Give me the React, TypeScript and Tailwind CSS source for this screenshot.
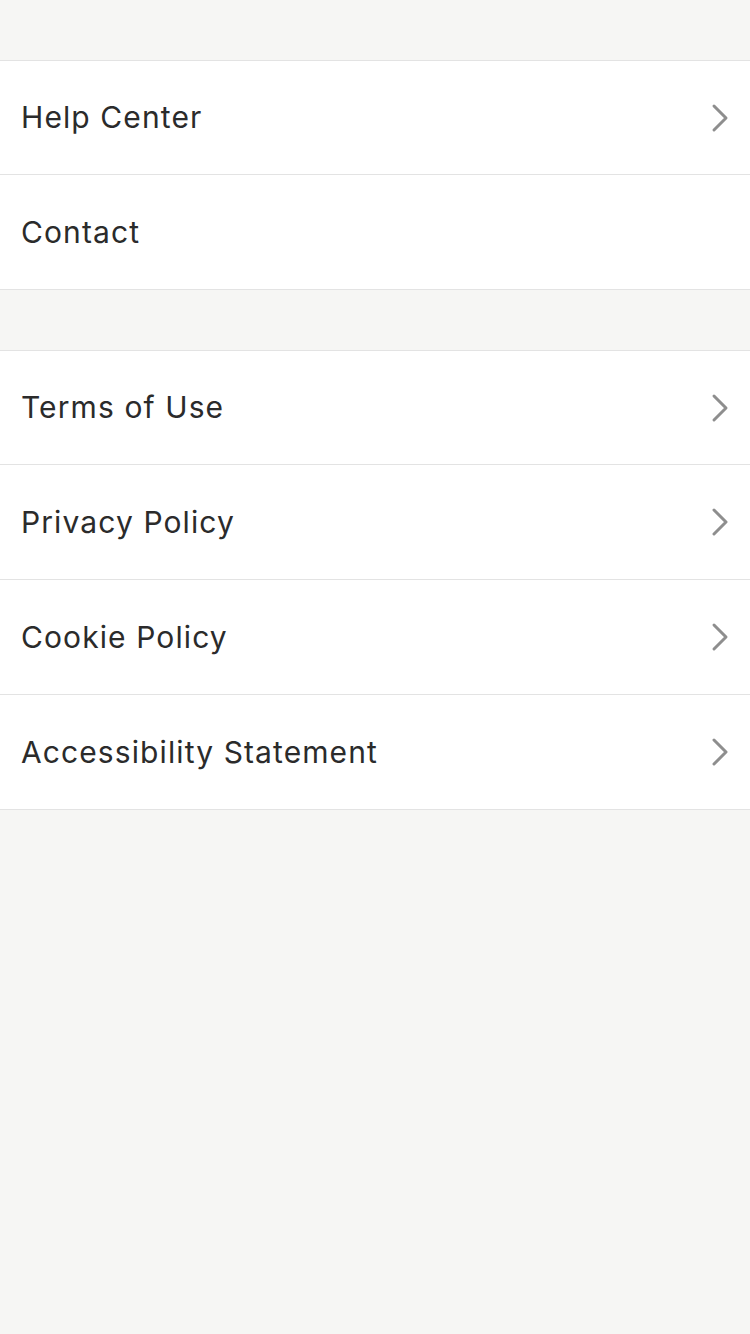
import React from "react";

type Item = { label: string; chevron: boolean };

const groups: Item[][] = [
  [
    { label: "Help Center", chevron: true },
    { label: "Contact", chevron: false },
  ],
  [
    { label: "Terms of Use", chevron: true },
    { label: "Privacy Policy", chevron: true },
    { label: "Cookie Policy", chevron: true },
    { label: "Accessibility Statement", chevron: true },
  ],
];

function Chevron() {
  return (
    <svg width="18" height="30" viewBox="0 0 18 30" fill="none">
      <path
        d="M3 3 L15 15 L3 27"
        stroke="#8e8e8e"
        strokeWidth="3"
        strokeLinecap="round"
        strokeLinejoin="round"
      />
    </svg>
  );
}

export default function App() {
  return (
    <div
      className="min-h-[1334px] w-[750px] bg-[#f6f6f4] pt-[60px]"
      style={{ fontFamily: "Inter, 'Noto Sans', sans-serif" }}
    >
      {groups.map((group, gi) => (
        <div
          key={gi}
          className={`bg-white border-t border-b border-[#e3e3e3] ${gi > 0 ? "mt-[60px]" : ""}`}
        >
          {group.map((item, i) => {
            const last = i === group.length - 1;
            return (
              <div
                key={item.label}
                className={`flex items-center justify-between pl-[21px] pr-[21px] ${
                  i === 0 || last ? "h-[114px]" : "h-[115px]"
                } ${last ? "" : "border-b border-[#e3e3e3]"}`}
              >
                <span className="text-[30px] text-[#2b2b2b] tracking-[1.1px]">{item.label}</span>
                {item.chevron && <Chevron />}
              </div>
            );
          })}
        </div>
      ))}
    </div>
  );
}
